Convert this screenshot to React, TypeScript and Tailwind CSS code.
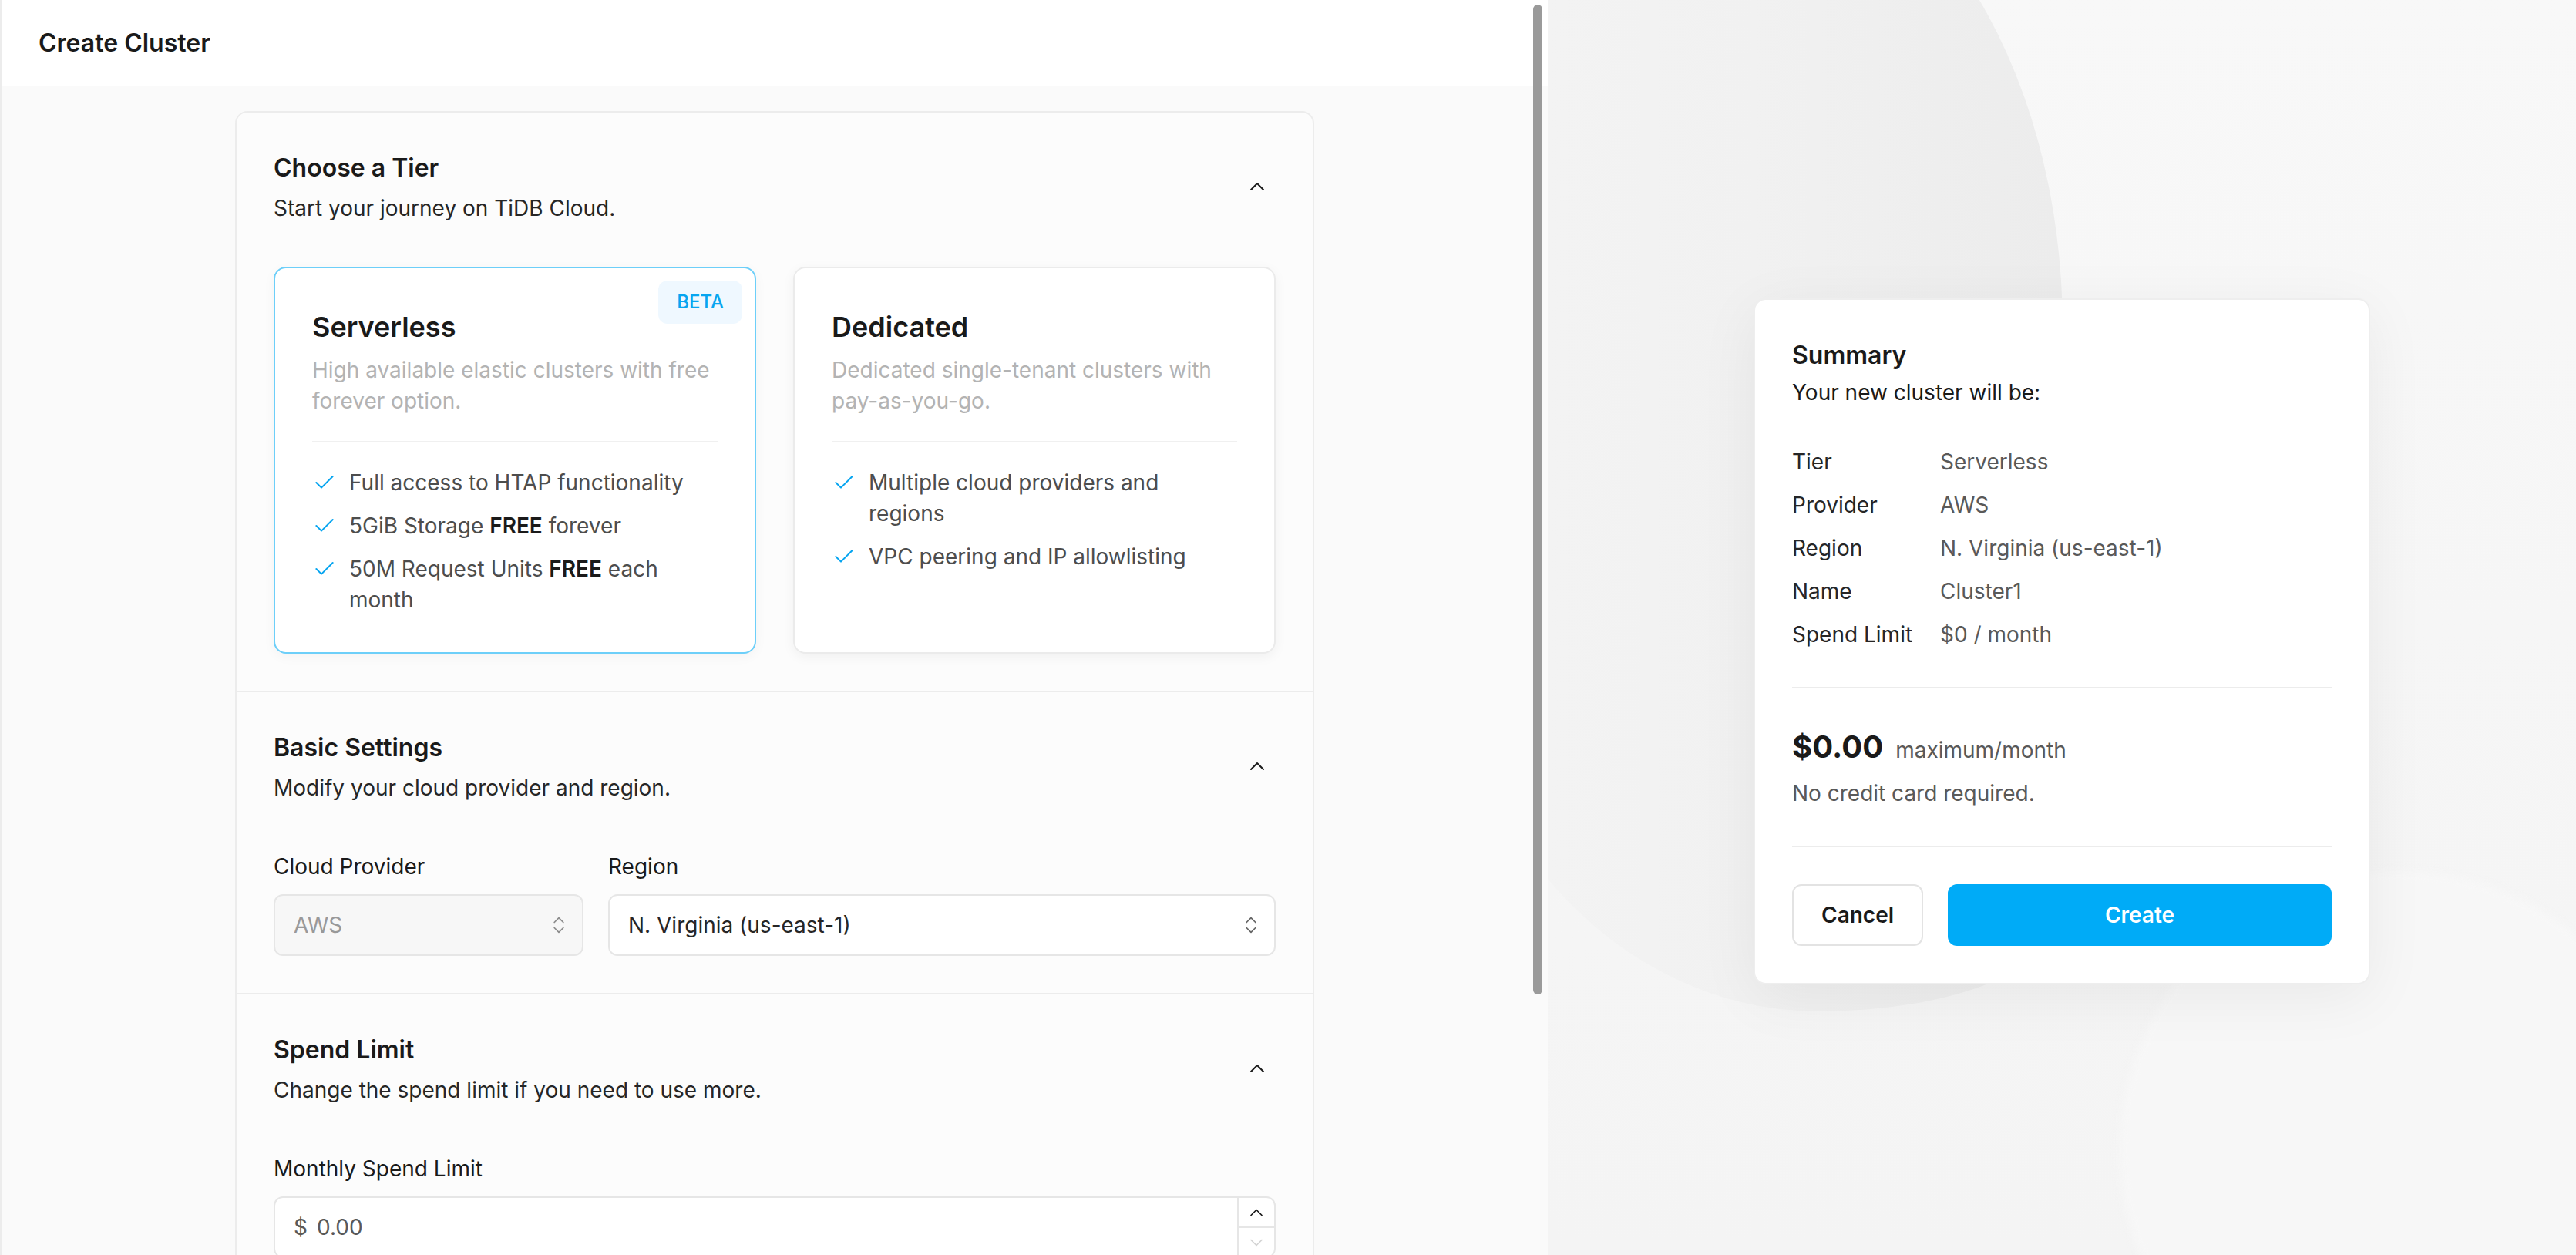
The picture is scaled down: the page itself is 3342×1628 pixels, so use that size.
import { Check, ChevronDown, ChevronUp, ChevronsUpDown } from "lucide-react";

// a feature line is a list of [text, bold?] segments
type Seg = [string, boolean?];

type Tier = {
  name: string;
  desc: string;
  beta?: boolean;
  selected?: boolean;
  features: Seg[][];
};

const tiers: Tier[] = [
  {
    name: "Serverless",
    desc: "High available elastic clusters with free forever option.",
    beta: true,
    selected: true,
    features: [
      [["Full access to HTAP functionality"]],
      [["5GiB Storage "], ["FREE", true], [" forever"]],
      [["50M Request Units "], ["FREE", true], [" each "], ["month"]],
    ],
  },
  {
    name: "Dedicated",
    desc: "Dedicated single-tenant clusters with pay-as-you-go.",
    features: [[["Multiple cloud providers and "], ["regions"]], [["VPC peering and IP allowlisting"]]],
  },
];

const summary = [
  ["Tier", "Serverless"],
  ["Provider", "AWS"],
  ["Region", "N. Virginia (us-east-1)"],
  ["Name", "Cluster1"],
  ["Spend Limit", "$0 / month"],
];

function SectionHead({ title, sub }: { title: string; sub: string }) {
  return (
    <div className="flex items-center justify-between">
      <div>
        <h2 className="text-base font-semibold leading-6 text-[#1a1a1a]">{title}</h2>
        <p className="mt-1 text-sm leading-5 text-[#262626]">{sub}</p>
      </div>
      <button className="flex h-6 w-6 items-center justify-center text-[#1a1a1a]">
        <ChevronUp size={16} strokeWidth={1.5} />
      </button>
    </div>
  );
}

function TierCard({ tier }: { tier: Tier }) {
  return (
    <div
      className={
        tier.selected
          ? "relative rounded-lg border border-[#6dcff9] bg-white p-6 shadow-[0_2px_8px_rgba(0,0,0,0.04)]"
          : "relative rounded-lg border border-[#ebebeb] bg-white p-6 shadow-[0_2px_8px_rgba(0,0,0,0.05)]"
      }
    >
      {tier.beta && (
        <span className="absolute right-2 top-2 rounded-md bg-[#eff8ff] px-3 py-1.5 text-xs font-medium leading-4 text-[#07a5f0]">
          BETA
        </span>
      )}
      <h3 className="text-lg font-semibold leading-7 text-[#1a1a1a]">{tier.name}</h3>
      <p className="mt-1 text-sm leading-5 text-[#b3b3b3]">{tier.desc}</p>
      <div className="mt-4 h-px bg-[#f0f0f0]" />
      <ul className="mt-4 space-y-2">
        {tier.features.map((segs, i) => (
          <li key={i} className="flex items-start gap-2 text-sm leading-5 text-[#4d4d4d]">
            <Check size={16} strokeWidth={1.5} className="mt-0.5 shrink-0 text-[#07a5f0]" />
            <p>
              {segs.map(([t, bold], j) =>
                bold ? (
                  <b key={j} className="font-semibold text-[#1a1a1a]">
                    {t}
                  </b>
                ) : (
                  <span key={j} className="whitespace-pre-wrap">
                    {t}
                  </span>
                )
              )}
            </p>
          </li>
        ))}
      </ul>
    </div>
  );
}

export default function App() {
  return (
    <div className="h-screen w-screen overflow-hidden bg-[#f5f5f5]">
      <div className="flex h-[814px] w-[1671px] font-['Inter',sans-serif] [zoom:2]">
        {/* Left: form */}
        <div className="relative flex w-[1004px] shrink-0 flex-col overflow-hidden border-l border-[#ececec] bg-[#fafafa]">
          <header className="flex h-14 shrink-0 items-center bg-white px-6">
            <h1 className="text-base font-semibold text-[#1a1a1a]">Create Cluster</h1>
          </header>

          <main className="flex-1 pt-4">
            <div className="mx-auto w-[700px] rounded-lg border border-[#ececec] bg-[#fcfcfc]">
              {/* Choose a Tier */}
              <section className="p-6">
                <SectionHead title="Choose a Tier" sub="Start your journey on TiDB Cloud." />
                <div className="mt-7 grid grid-cols-2 gap-6">
                  {tiers.map((t) => (
                    <TierCard key={t.name} tier={t} />
                  ))}
                </div>
              </section>

              {/* Basic Settings */}
              <section className="border-t border-[#ececec] p-6">
                <SectionHead title="Basic Settings" sub="Modify your cloud provider and region." />
                <div className="mt-[31px] grid grid-cols-[201px_1fr] gap-x-4">
                  <div>
                    <label className="block text-sm leading-5 text-[#1a1a1a]">Cloud Provider</label>
                    <div className="mt-2 flex h-10 items-center justify-between rounded-md border border-[#e6e6e6] bg-[#f7f7f7] pl-3 pr-2 text-sm text-[#999]">
                      <span>AWS</span>
                      <ChevronsUpDown size={14} strokeWidth={1.5} className="text-[#8c8c8c]" />
                    </div>
                  </div>
                  <div>
                    <label className="block text-sm leading-5 text-[#1a1a1a]">Region</label>
                    <div className="mt-2 flex h-10 items-center justify-between rounded-md border border-[#e6e6e6] bg-white pl-3 pr-2 text-sm text-[#262626]">
                      <span>N. Virginia (us-east-1)</span>
                      <ChevronsUpDown size={14} strokeWidth={1.5} className="text-[#666]" />
                    </div>
                  </div>
                </div>
              </section>

              {/* Spend Limit */}
              <section className="border-t border-[#ececec] p-6">
                <SectionHead title="Spend Limit" sub="Change the spend limit if you need to use more." />
                <label className="mt-[31px] block text-sm leading-5 text-[#1a1a1a]">Monthly Spend Limit</label>
                <div className="mt-2 flex h-10 overflow-hidden rounded-md border border-[#e6e6e6] bg-white">
                  <div className="flex flex-1 items-center gap-1.5 pl-3 text-sm text-[#595959]">
                    <span>$</span>
                    <span>0.00</span>
                  </div>
                  <div className="flex w-6 flex-col border-l border-[#e6e6e6]">
                    <button className="flex flex-1 items-center justify-center text-[#1a1a1a]">
                      <ChevronUp size={14} strokeWidth={1.5} />
                    </button>
                    <button className="flex flex-1 items-center justify-center border-t border-[#e6e6e6] text-[#d4d4d4]">
                      <ChevronDown size={14} strokeWidth={1.5} />
                    </button>
                  </div>
                </div>
              </section>
            </div>
          </main>

          {/* overlay scrollbar */}
          <div className="absolute right-[3.5px] top-[3px] h-[642px] w-1.5 rounded-full bg-[#9a9a9a]" />
        </div>

        {/* Right: summary */}
        <div className="relative flex flex-1 items-center justify-center overflow-hidden bg-gradient-to-b from-[#f8f8f8] to-[#f4f4f4] pt-[18px]">
          {/* background shapes */}
          <div className="absolute -left-[66px] -top-[107px] h-[763px] w-[400px] rounded-[0_213px_158px_242px/0_320px_64px_274px] bg-gradient-to-r from-[#f4f4f4] via-[#f1f1f1] to-[#ececec]" />
          <div className="absolute left-[371px] top-[565px] h-[362px] w-[362px] rounded-full bg-[#f7f7f7] blur-[3px]" />

          <div className="relative w-[400px] rounded-lg border border-[#eeeeee] bg-white p-6 shadow-[0_8px_40px_rgba(0,0,0,0.06)]">
            <h2 className="text-base font-semibold leading-6 text-[#1a1a1a]">Summary</h2>
            <p className="mt-0.5 text-sm leading-5 text-[#1a1a1a]">Your new cluster will be:</p>

            <dl className="mt-[25px] grid grid-cols-[96px_1fr] gap-y-2 text-sm leading-5">
              {summary.map(([k, v]) => (
                <div key={k} className="contents">
                  <dt className="text-[#262626]">{k}</dt>
                  <dd className="text-[#595959]">{v}</dd>
                </div>
              ))}
            </dl>

            <div className="mt-6 h-px bg-[#ececec]" />

            <div className="mt-6 flex items-baseline gap-2">
              <span className="text-xl font-bold leading-7 text-[#1a1a1a]">$0.00</span>
              <span className="text-sm text-[#595959]">maximum/month</span>
            </div>
            <p className="mt-1.5 text-sm leading-5 text-[#595959]">No credit card required.</p>

            <div className="mt-6 h-px bg-[#ececec]" />

            <div className="mt-6 flex gap-4">
              <button className="h-10 rounded-md border border-[#e3e3e3] bg-white px-[18px] text-sm font-semibold text-[#1a1a1a]">
                Cancel
              </button>
              <button className="h-10 flex-1 rounded-md bg-[#00abf7] text-sm font-semibold text-white">
                Create
              </button>
            </div>
          </div>
        </div>
      </div>
    </div>
  );
}
